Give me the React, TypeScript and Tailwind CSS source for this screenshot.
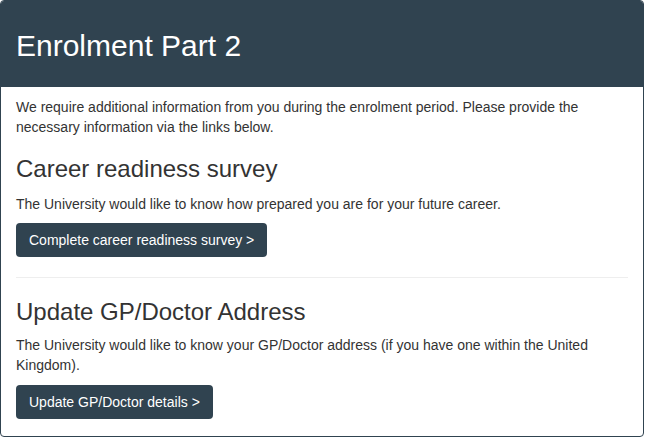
export default function App() {
	return (
		<div
			className="w-[644px] h-[437px] flex flex-col border border-[#304350] rounded-[4px] overflow-hidden bg-white text-[#333333]"
			style={{ fontFamily: '"Liberation Sans", Arial, sans-serif' }}
		>
			<div className="h-[86px] shrink-0 bg-[#304350] px-[15px] flex items-center">
				<h1 className="text-[30px] leading-none text-white pt-[4px]">Enrolment Part 2</h1>
			</div>

			<div className="px-[15px] pt-[10px] text-[14px] leading-[20px]">
				<p>
					We require additional information from you during the enrolment period. Please provide the
					necessary information via the links below.
				</p>

				<h2 className="text-[24px] leading-[28px] mt-[18px] mb-[11px]">Career readiness survey</h2>
				<p className="mb-[9px]">The University would like to know how prepared you are for your future career.</p>
				<button className="h-[34px] px-[13px] rounded-[4px] bg-[#304350] text-white text-[14px]">
					Complete career readiness survey &gt;
				</button>

				<hr className="mt-[20px] border-t border-[#eeeeee]" />

				<h2 className="text-[24px] leading-[28px] mt-[20px] mb-[9px]">Update GP/Doctor Address</h2>
				<p className="mb-[10px]">
					The University would like to know your GP/Doctor address (if you have one within the United
					Kingdom).
				</p>
				<button className="h-[34px] px-[13px] rounded-[4px] bg-[#304350] text-white text-[14px]">
					Update GP/Doctor details &gt;
				</button>
			</div>
		</div>
	);
}
